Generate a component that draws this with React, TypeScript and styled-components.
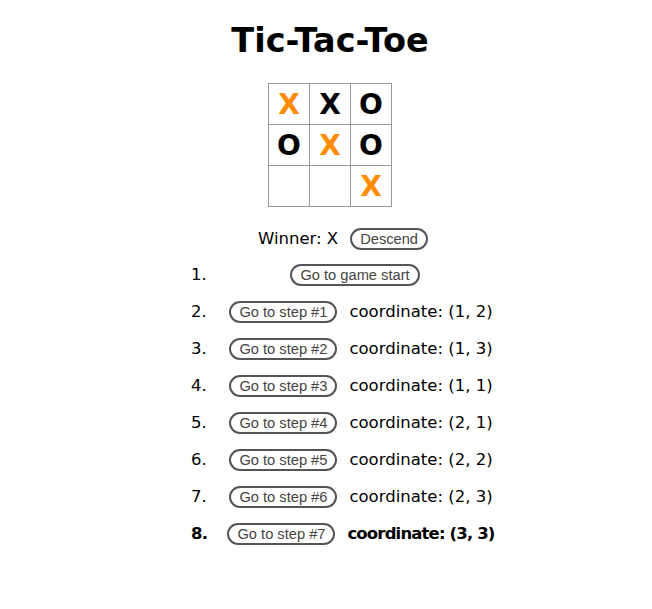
import * as React from 'react';
import styled, { createGlobalStyle } from 'styled-components';

const GlobalStyle = createGlobalStyle`
  body {
    margin: 0;
    background: #fff;
    color: #000;
    font-family: "DejaVu Sans", "Noto Sans", sans-serif;
  }
`;

const PageElm = styled.div`
  display: flex;
  flex-direction: column;
  align-items: center;
  padding: 22px 0 0 8px;
`;

const TitleElm = styled.h1`
  margin: 0;
  font-size: 33.5px;
  line-height: 38px;
  font-weight: bold;
`;

const BoardElm = styled.div`
  display: grid;
  grid-template-columns: repeat(3, 41px);
  grid-template-rows: repeat(3, 41px);
  margin-top: 23px;
  border-top: 1px solid #999;
  border-left: 1px solid #999;
`;

const CellElm = styled.div<{ $win: boolean }>`
  display: flex;
  align-items: center;
  justify-content: center;
  border-right: 1px solid #999;
  border-bottom: 1px solid #999;
  font-size: 28px;
  font-weight: bold;
  color: ${(p) => (p.$win ? '#ff8c00' : '#000')};
`;

const StatusElm = styled.div`
  display: flex;
  align-items: baseline;
  gap: 12px;
  margin: 21px 0 0 26px;
  font-size: 16.5px;
`;

const PillButton = styled.button`
  display: inline-block;
  padding: 1px 8px;
  border: 2px solid #555;
  border-radius: 12px;
  background: #fff;
  color: #444;
  font-family: "Liberation Sans", Arial, sans-serif;
  font-size: 14.67px;
  font-weight: normal;
  letter-spacing: normal;
  line-height: normal;
  cursor: pointer;
`;

const MovesElm = styled.ol`
  width: 298px;
  margin: 6px 0 0 22px;
  padding-left: 40px;
  font-size: 16.5px;
`;

const MoveElm = styled.li<{ $current: boolean }>`
  height: 37px;
  line-height: 37px;
  text-align: center;
  font-weight: ${(p) => (p.$current ? 'bold' : 'normal')};
  letter-spacing: ${(p) => (p.$current ? '-0.85px' : 'normal')};
`;

const CoordElm = styled.span`
  margin-left: 12px;
`;

const squares = ['X', 'X', 'O', 'O', 'X', 'O', null, null, 'X'];
const winLine = [0, 4, 8];
const coords = ['', '(1, 2)', '(1, 3)', '(1, 1)', '(2, 1)', '(2, 2)', '(2, 3)', '(3, 3)'];

export default function App() {
  return (
    <>
      <GlobalStyle />
      <PageElm>
        <TitleElm>Tic-Tac-Toe</TitleElm>
        <BoardElm>
          {squares.map((sq, i) => (
            <CellElm key={i} $win={winLine.includes(i)}>
              {sq}
            </CellElm>
          ))}
        </BoardElm>
        <StatusElm>
          <span>Winner: X</span>
          <PillButton>Descend</PillButton>
        </StatusElm>
        <MovesElm>
          {coords.map((c, i) => (
            <MoveElm key={i} $current={i === coords.length - 1}>
              <PillButton>{i === 0 ? 'Go to game start' : `Go to step #${i}`}</PillButton>
              <CoordElm>{c ? `coordinate: ${c}` : ''}</CoordElm>
            </MoveElm>
          ))}
        </MovesElm>
      </PageElm>
    </>
  );
}
